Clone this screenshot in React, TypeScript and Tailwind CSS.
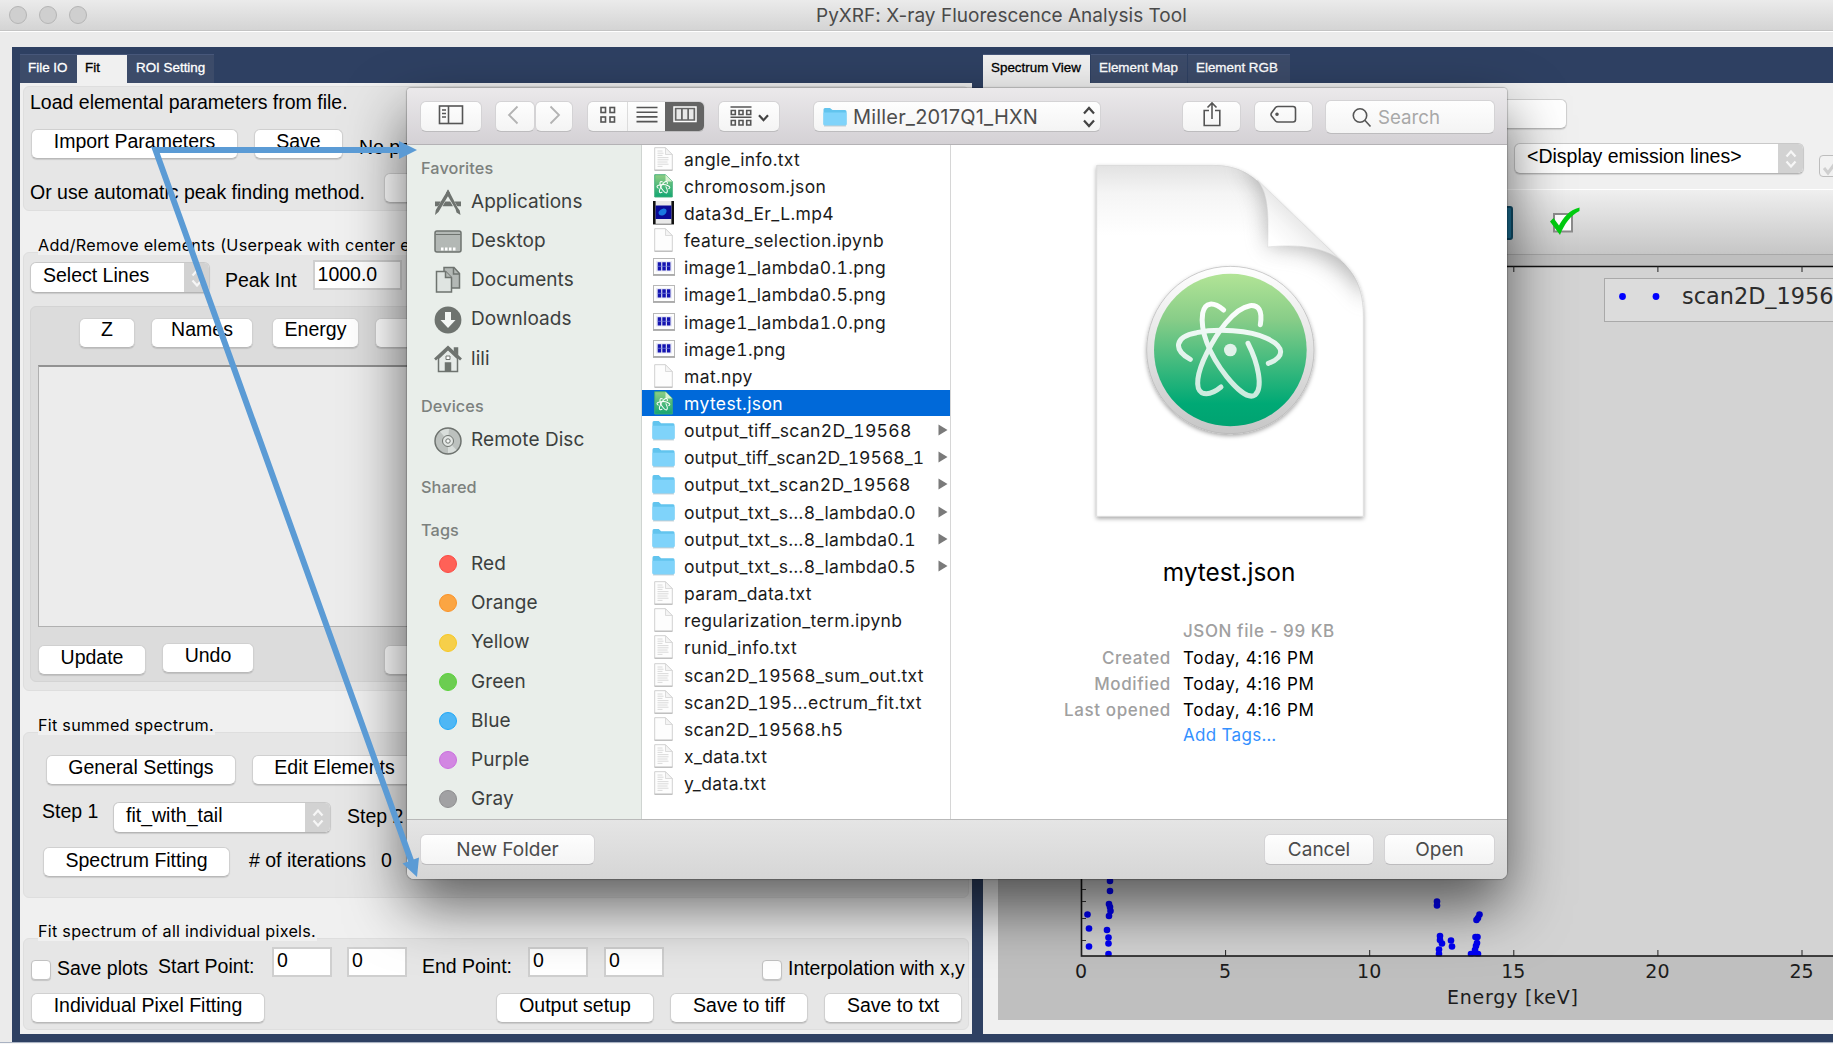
import React from "react";

type Kids = { children?: React.ReactNode; className?: string };

/* ---------- form controls of the main window ---------- */

function Btn({ children, className = "" }: Kids) {
  return (
    <div
      className={`h-[30px] shrink-0 rounded-[6px] border border-[#d0d0d0] border-b-[#b9b9b9] bg-white text-center leading-5 shadow-[0_1px_1px_rgba(0,0,0,0.12)] ${className}`}
    >
      {children}
    </div>
  );
}

function Combo({ children, className = "" }: Kids) {
  return (
    <div
      className={`flex h-[31px] shrink-0 justify-between overflow-hidden rounded-[6px] border border-[#c9c9c9] border-b-[#b5b5b5] bg-white pl-3 leading-5 shadow-[0_1px_1px_rgba(0,0,0,0.12)] ${className}`}
    >
      <span className="whitespace-nowrap pt-[2px]">{children}</span>
      <span className="flex h-full w-[25px] items-center justify-center bg-[#d2d2d2]">
        <svg width="12" height="18" viewBox="0 0 12 18" fill="none" stroke="#f6f6f6" strokeWidth="2.2">
          <path d="M1.5 6.5 6 1.5l4.500 5M1.500 11.500l4.500 5 4.500-5" />
        </svg>
      </span>
    </div>
  );
}

function Field({ children, className = "" }: Kids) {
  return (
    <div className={`h-[30px] shrink-0 border-2 border-[#cfcfcf] bg-white pl-[3px] leading-[23px] ${className}`}>
      {children}
    </div>
  );
}

function Check({ className = "" }: Kids) {
  return (
    <div
      className={`size-[20px] shrink-0 rounded-[4px] border-[1.500px] border-[#c2c2c2] bg-white shadow-[0_1px_1px_rgba(0,0,0,0.15)] ${className}`}
    />
  );
}

function GroupTitle({ children, className = "" }: Kids) {
  return (
    <div
      className={`relative z-10 -mb-[3px] ml-[18px] h-5 w-fit whitespace-nowrap bg-[#f0f0f0] pr-px font-[Inter,sans-serif] text-[16.200px] leading-5 tracking-[0.260px] ${className}`}
    >
      {children}
    </div>
  );
}

function Group({ children, className = "" }: Kids) {
  return (
    <div className={`ml-[3px] w-[946px] shrink-0 rounded-[6px] border border-[#dedede] bg-[#e6e6e6] ${className}`}>
      {children}
    </div>
  );
}

function Txt({ children, className = "" }: Kids) {
  return <span className={`shrink-0 whitespace-nowrap leading-5 ${className}`}>{children}</span>;
}

function FitPanel() {
  return (
    <div className="flex h-[951px] w-[952px] shrink-0 flex-col bg-[#f0f0f0]">
      <Group className="mt-[3px] h-[125px] pt-[5px]">
        <div className="h-5 pl-[6px] leading-5">Load elemental parameters from file.</div>
        <div className="mt-[17px] flex pl-[7px]">
          <Btn className="w-[207px] pt-px">Import Parameters</Btn>
          <Btn className="ml-4 w-[89px] pt-px">Save</Btn>
          <Txt className="ml-4 mt-2">No pe</Txt>
        </div>
        <div className="mt-[14px] flex pl-[6px]">
          <Txt className="mt-[9px] w-[354px]">Or use automatic peak finding method.</Txt>
          <Btn className="w-[200px]" />
        </div>
      </Group>

      <GroupTitle className="mt-[24px]">Add/Remove elements (Userpeak with center e</GroupTitle>
      <Group className="h-[439px] pt-[9px]">
        <div className="flex h-[30px] pl-[6px]">
          <Combo className="w-[180px]">Select Lines</Combo>
          <Txt className="ml-[15px] mt-2">Peak Int</Txt>
          <Field className="-mt-0.5 ml-4 w-[89px] pt-px">1000.0</Field>
        </div>
        <div className="ml-[6px] mt-[14px] h-[376px] w-[930px] rounded-[6px] border border-[#d4d4d4] bg-[#dcdcdc] pt-[11px]">
          <div className="flex pl-[48px]">
            <Btn className="w-[56px]">Z</Btn>
            <Btn className="ml-4 w-[102px]">Names</Btn>
            <Btn className="ml-[19px] w-[87px]">Energy</Btn>
            <Btn className="ml-[16px] w-[100px]" />
          </div>
          <div className="ml-[7px] mt-[17px] h-[262px] w-[900px] border border-t-2 border-[#b0b0b0] border-t-[#929292] bg-[#ececec]" />
          <div className="mt-[16px] flex pl-[7px]">
            <Btn className="mt-[2px] w-[108px] pt-px">Update</Btn>
            <Btn className="ml-4 w-[92px] pt-px">Undo</Btn>
            <Btn className="ml-[130px] mt-[2px] w-[100px]" />
          </div>
        </div>
      </Group>

      <GroupTitle className="mt-[24px]">Fit summed spectrum.</GroupTitle>
      <Group className="h-[166px] pt-[22px]">
        <div className="flex pl-[22px]">
          <Btn className="w-[190px] pt-px">General Settings</Btn>
          <Btn className="ml-4 w-[165px] pt-px">Edit Elements</Btn>
        </div>
        <div className="mt-[17px] flex h-[31px] pl-[18px]">
          <Txt className="-mt-px w-[71px]">Step 1</Txt>
          <Combo className="w-[218px]">fit_with_tail</Combo>
          <Txt className="ml-4 mt-1">Step 2</Txt>
        </div>
        <div className="mt-[14px] flex pl-[19px]">
          <Btn className="w-[187px] pt-[2px]">Spectrum Fitting</Btn>
          <Txt className="ml-[19px] mt-[3px] w-[132px]"># of iterations</Txt>
          <Txt className="mt-[3px]">0</Txt>
        </div>
      </Group>

      <GroupTitle className="mt-[23px]">Fit spectrum of all individual pixels.</GroupTitle>
      <Group className="h-[92px] pt-2">
        <div className="flex h-[30px] pl-[7px]">
          <Check className="mt-[13px]" />
          <Txt className="ml-[6px] mt-[11px] w-[101px]">Save plots</Txt>
          <Txt className="mt-[9px] w-[114px]">Start Point:</Txt>
          <Field className="w-[60px]">0</Field>
          <Field className="ml-[15px] w-[60px]">0</Field>
          <Txt className="ml-[15px] mt-[9px] w-[106px]">End Point:</Txt>
          <Field className="w-[60px]">0</Field>
          <Field className="ml-4 w-[60px]">0</Field>
          <Check className="ml-[98px] mt-[13px]" />
          <Txt className="ml-[6px] mt-[11px] text-[19.400px]">Interpolation with x,y</Txt>
        </div>
        <div className="mt-4 flex pl-[7px]">
          <Btn className="w-[234px] pt-px">Individual Pixel Fitting</Btn>
          <Btn className="ml-[231px] w-[158px] pt-px">Output setup</Btn>
          <Btn className="ml-4 w-[138px] pt-px">Save to tiff</Btn>
          <Btn className="ml-4 w-[138px] pt-px">Save to txt</Btn>
        </div>
      </Group>
    </div>
  );
}

/* ---------- spectrum plot ---------- */

const dots: [number, number][] = [
  [1087.5, 914.5], [1089, 928.5], [1089, 946.5],
  [1110, 881], [1110, 891], [1109, 904], [1110, 907], [1110.5, 911], [1109, 916],
  [1107, 930], [1108.5, 937.5], [1108.5, 943.5], [1108.5, 954],
  [1437, 901.5], [1437, 905.5],
  [1440, 936], [1440, 940], [1442, 943.5], [1439, 949.5], [1439, 954], [1451, 940.5], [1452, 946.5],
  [1479.500, 914.5], [1478, 918], [1476.5, 920],
  [1475.5, 937], [1477.5, 937], [1477, 943], [1476, 946], [1475, 950], [1475, 953], [1471, 954], [1478, 954],
];

function Spectrum() {
  const ticks = [0, 5, 10, 15, 20, 25];
  return (
    <svg width="835" height="765" viewBox="998 255 835 765" className="ml-[15px] shrink-0" fontFamily="'DejaVu Sans', sans-serif">
      <rect x="998" y="255" width="835" height="765" fill="#bfbfbf" />
      <rect x="1081" y="266" width="760" height="690" fill="#d3d3d3" />
      {dots.map(([x, y], i) => (
        <circle key={i} cx={x} cy={y} r="3.3" fill="#0000f5" />
      ))}
      <rect x="1081" y="956.500" width="760" height="8" fill="#bfbfbf" />
      <path d="M1840 266.500H1081.500V956H1840" fill="none" stroke="#111" strokeWidth="1.600" />
      {ticks.map((t, i) => (
        <g key={t}>
          <path d={`M${1081.5 + i * 144.1} 956v-6M${1081.5 + i * 144.1} 266v6`} stroke="#222" />
          <text x={1081 + i * 144.1} y="977.500" textAnchor="middle" fontSize="19" fill="#1c1c1c">
            {t}
          </text>
        </g>
      ))}
      <path d="M1082 889.500h4M1082 901.500h4M1082 918.500h4M1082 940.500h4" stroke="#333" />
      <text x="1447" y="1004" fontSize="19" textLength="131" fill="#1c1c1c">
        Energy [keV]
      </text>
      <rect x="1604.500" y="278.500" width="300" height="43" fill="#dcdcdc" stroke="#a9a9a9" />
      <circle cx="1622.500" cy="296.500" r="3.400" fill="#0000ff" />
      <circle cx="1656" cy="296.500" r="3.400" fill="#0000ff" />
      <text x="1682" y="304" fontSize="22.400" fill="#2c2c2c">
        scan2D_19568
      </text>
    </svg>
  );
}

function SpectrumPanel() {
  return (
    <div className="flex h-[951px] w-[850px] shrink-0 flex-col overflow-hidden bg-[#f0f0f0]">
      <div className="mt-4 flex h-[30px] shrink-0">
        <Btn className="ml-[380px] w-[204px]" />
      </div>
      <div className="mt-[14px] flex h-[31px] shrink-0">
        <Combo className="ml-[531px] w-[290px]">&lt;Display emission lines&gt;</Combo>
        <div className="ml-[15px] mt-3 flex size-[22px] shrink-0 items-end rounded-[4px] border-[1.500px] border-[#bdbdbd] bg-[#f2f2f2]">
          <svg width="20" height="16" viewBox="0 0 20 16" fill="none" stroke="#cfcfcf" strokeWidth="3">
            <path d="M4 8l4 5 8-11" />
          </svg>
        </div>
      </div>
      <div className="mt-[15px] flex h-[66px] shrink-0 border-y border-b-[#a8a8a8] border-t-white bg-linear-to-b from-[#efefef] to-[#c6c6c6]">
        <div className="ml-[500px] mt-[16px] h-[34px] w-[30px] rounded-[3px] border-2 border-[#0f4c68] bg-[#1d6f94]" />
        <svg width="32" height="32" viewBox="0 0 32 32" className="ml-[36px] mt-4">
          <rect x="5" y="8" width="18" height="17.500" fill="#fff" stroke="#8b8b8b" strokeWidth="2" />
          <path d="M1 15.500 4.500 12l5.500 7.500C14 12 20 4 30.500 1.500L30.500 5C22 9 15 18.500 11 29Z" fill="#00cc10" />
        </svg>
      </div>
      <Spectrum />
    </div>
  );
}

/* ---------- file dialog ---------- */

function ToolBtn({ children, className = "" }: Kids) {
  return (
    <div
      className={`flex h-[31px] shrink-0 items-center justify-center rounded-[6px] border border-[#d4d3d5] border-b-[#bdbcbe] bg-linear-to-b from-[#fefefe] to-[#f4f4f4] ${className}`}
    >
      {children}
    </div>
  );
}

function Toolbar() {
  const s = { fill: "none", stroke: "#555", strokeWidth: 1.6 };
  return (
    <div className="flex h-[57px] shrink-0 items-start border-b border-[#b4b2b5] bg-linear-to-b from-[#ebe9eb] to-[#d4d1d5] pl-[13px] pt-3 text-[#4d4d4d]">
      <ToolBtn className="mt-px w-[62px]">
        <svg width="26" height="20" viewBox="0 0 26 20" {...s} className="-mt-1">
          <rect x="1.500" y="1" width="23" height="17.500" />
          <path d="M10.500 1v17.500M4 5h4M4 8.500h4M4 12h4" />
        </svg>
      </ToolBtn>
      <ToolBtn className="ml-[13px] mt-px w-[40px]">
        <svg width="12" height="20" viewBox="0 0 12 20" fill="none" stroke="#b3b3b3" strokeWidth="1.800" className="-ml-1 -mt-1">
          <path d="M10.500 1.500 2 10l8.500 8.500" />
        </svg>
      </ToolBtn>
      <ToolBtn className="mt-px w-[38px]">
        <svg width="12" height="20" viewBox="0 0 12 20" fill="none" stroke="#b3b3b3" strokeWidth="1.800" className="-mt-1 ml-0.5">
          <path d="M1.500 1.500 10 10l-8.500 8.500" />
        </svg>
      </ToolBtn>
      <ToolBtn className="ml-[14px] mt-px w-[118px] overflow-hidden">
        <span className="flex h-full w-[40px] items-center justify-center border-r border-[#dcdcdc]">
          <svg width="16" height="18" viewBox="0 0 16 18" {...s} className="-mt-1">
            <rect x="1" y="1.500" width="4.500" height="5" />
            <rect x="10" y="1.500" width="4.500" height="5" />
            <rect x="1" y="11" width="4.500" height="5" />
            <rect x="10" y="11" width="4.500" height="5" />
          </svg>
        </span>
        <span className="flex h-full flex-1 items-center justify-center">
          <svg width="22" height="17" viewBox="0 0 22 17" {...s} className="-mt-1">
            <path d="M0.500 1.500h21M0.500 6.200h21M0.500 10.900h21M0.500 15.600h21" />
          </svg>
        </span>
        <span className="flex h-full w-[39px] items-center justify-center bg-[#646464]">
          <svg width="24" height="17" viewBox="0 0 24 17" className="-mt-1">
            <rect x="1" y="1" width="22" height="14.500" fill="none" stroke="#fff" strokeWidth="1.500" />
            <path d="M3.500 3.200h4.500v10H3.500zM9.800 3.200h4.500v10H9.800zM16 3.200h4.500v10H16z" fill="#e8e8e8" />
          </svg>
        </span>
      </ToolBtn>
      <ToolBtn className="ml-[13px] mt-px w-[62px] gap-[6px]">
        <svg width="22" height="21" viewBox="0 0 22 21" {...s}>
          <path d="M0.500 1h21M0.500 11.300h21" />
          <path d="M1.300 4.500h4v4h-4zM9 4.500h4v4H9zM16.700 4.500h4v4h-4zM1.300 14.500h4v4.500h-4zM9 14.500h4v4.500H9zM16.700 14.500h4v4.500h-4z" />
        </svg>
        <svg width="11" height="8" viewBox="0 0 11 8" fill="none" stroke="#444" strokeWidth="2.200" className="mt-[3px]">
          <path d="M1 1.200l4.500 5 4.500-5" />
        </svg>
      </ToolBtn>
      <ToolBtn className="ml-[33px] mt-px w-[288px] !justify-start pl-[9px]">
        <Folder className="h-[20px] w-[24px]" />
        <span className="ml-[6px] text-[20px] leading-5 tracking-[0.180px]">Miller_2017Q1_HXN</span>
        <svg width="12" height="22" viewBox="0 0 12 22" fill="none" stroke="#444" strokeWidth="2.200" className="ml-auto mr-[5px]">
          <path d="M1 7.500 6 2l5 5.500M1 14.500 6 20l5-5.500" />
        </svg>
      </ToolBtn>
      <ToolBtn className="ml-[81px] mt-px w-[59px]">
        <svg width="18" height="27" viewBox="0 0 18 27" {...s} className="-mt-1">
          <path d="M6 9.500H1.200v15h15.600v-15H12M9 18V2M4.500 6.500 9 2l4.500 4.500" />
        </svg>
      </ToolBtn>
      <ToolBtn className="ml-[13px] mt-px w-[59px]">
        <svg width="27" height="19" viewBox="0 0 27 19" {...s} className="-mt-1">
          <path d="M8 1.500h15q2.500 0 2.500 2.500v10.500q0 2.500-2.500 2.500H8Q6.500 17 5.500 16L1.500 11q-1-1.500 0-3L5.500 2.500Q6.500 1.500 8 1.500Z" />
          <circle cx="7" cy="9.300" r="1" fill="#555" />
        </svg>
      </ToolBtn>
      <ToolBtn className="ml-[12px] h-[34px] w-[170px] !justify-start pl-[26px] !text-[#a8a8a8]">
        <svg width="20" height="21" viewBox="0 0 20 21" {...s}>
          <circle cx="8" cy="8.500" r="6.700" />
          <path d="M12.800 13.300 18.500 19.500" />
        </svg>
        <span className="ml-[6px] pt-px text-[18.700px] leading-5">Search</span>
      </ToolBtn>
    </div>
  );
}

function Folder({ className = "" }: Kids) {
  return (
    <svg viewBox="0 0 24 20" preserveAspectRatio="none" className={`shrink-0 ${className}`}>
      <path d="M0.500 2.500q0-1.500 1.500-1.500h5l2.500 2H22q1.500 0 1.500 1.500V17q0 1.500-1.500 1.500H2Q.500 18.500.500 17Z" fill="#62c4ee" />
      <path d="M.500 5.500h23V17q0 1.500-1.500 1.500H2Q.500 18.500.500 17Z" fill="#7fd3fa" />
      <path d="M1 19h22" stroke="#b9c4ca" strokeWidth=".8" />
    </svg>
  );
}

const sideIcons: Record<string, React.ReactNode> = {
  Applications: (
    <g fill="#6e736f">
      <path d="M12 5 14 1.500l2 3.500-2.200 3.600L4.500 24 1 27l.8-5Z" />
      <path d="M16 5 14 1.500l-2 3.500L21.500 21l1 3.500 4 2.500-.8-4.500-2.200-3Z" />
      <path d="M1 13.500h5.800l-2.700 4.700H1ZM11.300 13.500h4.900l2.800 4.700H8.500ZM20.500 13.500H27v4.700h-3.700Z" />
    </g>
  ),
  Desktop: (
    <g>
      <rect x="1" y="4" width="26" height="21" rx="2" fill="#b3b8b5" stroke="#6e736f" strokeWidth="1.500" />
      <path d="M1.500 7.500h25" stroke="#6e736f" strokeWidth="1.200" />
      <path d="M7 20.500h2.500v3H7zM11 20.500h2.500v3H11zM15 20.500h2.500v3H15zM19 20.500h2.500v3H19z" fill="#fff" />
    </g>
  ),
  Documents: (
    <g stroke="#6e736f" strokeWidth="1.500">
      <path d="M10 1.500h10l5.500 6v14.500H10Z" fill="#b3b8b5" />
      <path d="M19.500 2v6h6" fill="none" />
      <path d="M2.500 5.500h9l6 6v14.500h-15Z" fill="#dfe4e1" />
      <path d="M11.500 5.500v6h6" fill="#b3b8b5" />
    </g>
  ),
  Downloads: (
    <g>
      <circle cx="14" cy="14" r="13.400" fill="#6e736f" />
      <path d="M11 6h6v8h4.500L14 22 6.500 14H11Z" fill="#f3f6f4" />
    </g>
  ),
  lili: (
    <g stroke="#6e736f" strokeWidth="1.500">
      <path d="M4.500 13.500 14 4.500l9.500 9V26.500h-19Z" fill="#e6ebe8" />
      <path d="M1 14.500 14 2.500l13 12" fill="none" strokeWidth="2.800" />
      <path d="M20.500 3h3v6l-3-3Z" fill="#6e736f" />
      <path d="M11.500 18h5v8h-5Z" fill="#6e736f" />
      <path d="M12 11h4v3.500h-4Z" fill="#fff" strokeWidth="1" />
    </g>
  ),
  "Remote Disc": (
    <g fill="none" stroke="#6e736f">
      <circle cx="14" cy="14" r="13" fill="#bcc1be" strokeWidth="1.500" />
      <path d="M14 14 6 4.500A12 12 0 0 1 15 2ZM14 14l8.500 9A12 12 0 0 1 14 26Z" fill="#d9dedb" stroke="none" />
      <circle cx="14" cy="14" r="5.500" fill="#e3e7e4" strokeWidth="1" />
      <circle cx="14" cy="14" r="2.200" fill="#f5f7f6" strokeWidth="1" />
    </g>
  ),
};

const tags = [
  ["Red", "bg-[#ff6157] border-[#fb4a44]"],
  ["Orange", "bg-[#fba543] border-[#fb9327]"],
  ["Yellow", "bg-[#f6cf4a] border-[#f8c822]"],
  ["Green", "bg-[#6ccd51] border-[#5bd23b]"],
  ["Blue", "bg-[#4fb7f5] border-[#1fa8f8]"],
  ["Purple", "bg-[#d287e2] border-[#ca70de]"],
  ["Gray", "bg-[#a1a1a3] border-[#8e8e90]"],
];

function SideItem({ label, children }: { label: string; children: React.ReactNode }) {
  return (
    <div className="flex h-[39.200px] items-center pl-[27px] text-[19px] text-[#3c403e]">
      <span className="flex w-7 justify-center">{children}</span>
      <span className="ml-[9px] tracking-[0.060px]">{label}</span>
    </div>
  );
}

function Heading({ children, className = "" }: Kids) {
  return (
    <div className={`pl-[14px] text-[16.300px] font-medium leading-5 tracking-[0.100px] text-[#7c817e] ${className}`}>
      {children}
    </div>
  );
}

function SideIcon({ name }: { name: string }) {
  return (
    <svg width="28" height="28" viewBox="0 0 28 28">
      {sideIcons[name]}
    </svg>
  );
}

function Sidebar() {
  return (
    <div className="w-[235px] shrink-0 border-r border-[#cfd4d1] bg-[#e9eeea] pt-[12.500px]">
      <Heading>Favorites</Heading>
      <div className="mt-[5px]">
        {["Applications", "Desktop", "Documents", "Downloads", "lili"].map((n) => (
          <SideItem key={n} label={n}>
            <SideIcon name={n} />
          </SideItem>
        ))}
      </div>
      <Heading className="mt-[17.500px]">Devices</Heading>
      <div className="mt-[5px]">
        <SideItem label="Remote Disc">
          <SideIcon name="Remote Disc" />
        </SideItem>
      </div>
      <Heading className="mt-[17px]">Shared</Heading>
      <Heading className="mt-[23px]">Tags</Heading>
      <div className="mt-[4.500px]">
        {tags.map(([n, c]) => (
          <SideItem key={n} label={n}>
            <span className={`size-[18px] rounded-full border-[1.500px] ${c}`} />
          </SideItem>
        ))}
      </div>
    </div>
  );
}

const atom = (
  <>
    <path d="M421 628C370 600 372 560 440 548C500 535 600 540 650 565C705 590 705 622 655 640" />
    <path d="M521 480C490 455 465 455 458 490C450 540 475 610 530 680C570 730 600 745 615 735C640 715 625 640 594 580" />
    <path d="M631 524C638 480 625 465 600 467C550 475 500 550 470 610C440 670 435 715 455 728C470 735 490 730 513 711" />
  </>
);

function FileIcon({ kind }: { kind: string }) {
  if (kind === "folder") return <Folder className="h-[21px] w-[23px]" />;
  if (kind === "png")
    return (
      <svg width="22" height="18" viewBox="0 0 22 18">
        <rect x=".5" y=".5" width="21" height="16" fill="#fdfdfd" stroke="#b8b8b8" />
        <path d="M0 17.200h22" stroke="#8f8f8f" />
        <rect x="3" y="3" width="16" height="10.500" fill="#e9eaf6" />
        <path d="M4.700 4.200h3.500v8.300h-3.500zM9.300 4.200h3.500v8.300H9.300zM13.900 4.200h3.500v8.300h-3.500z" fill="#1414b0" />
        <path d="M4.500 8.300h13" stroke="#7c86e0" strokeWidth=".7" />
      </svg>
    );
  if (kind === "mp4")
    return (
      <svg width="21" height="24" viewBox="0 0 21 24">
        <rect width="21" height="22.500" fill="#e9e9e9" />
        <rect x="0" y="22.500" width="21" height="1.500" fill="#9a9a9a" />
        <path d="M0 0h2.600v23H0zM18.400 0H21v23h-2.600z" fill="#111" />
        <rect x="2.600" y="4.500" width="15.800" height="13.500" fill="#0a0a96" />
        <path d="M5.500 11q1.500-3 5-3.500 3.500 0 3 3t-4 4q-4 .5-4-3.500Z" fill="#1a78e0" />
      </svg>
    );
  const json = kind === "json";
  return (
    <svg width="19" height="24" viewBox="0 0 19 24">
      <defs>
        <linearGradient id="jsonIcon" x1="0" y1="0" x2="0" y2="1">
          <stop offset="0" stopColor="#8fce83" />
          <stop offset="1" stopColor="#12a673" />
        </linearGradient>
      </defs>
      <path
        d="M.7.7H11.500L18.300 7.500V23H.700Z"
        fill={json ? "url(#jsonIcon)" : "#fdfdfd"}
        stroke={json ? "#3fae78" : "#cccccc"}
        strokeWidth=".9"
      />
      <path d="M11.500.8V7.500h6.700Z" fill={json ? "#d9f2d4" : "#f4f4f4"} stroke={json ? "none" : "#d4d4d4"} strokeWidth=".8" />
      {!json && <path d="M.5 23.300h18" stroke="#b0b0b0" strokeWidth=".9" />}
      {kind === "txt" && (
        <path
          d="M3.500 4h5M3.500 6.200h6M3.500 8.400h5M3.500 10.600h11M3.500 12.800h11M3.500 15h10M3.500 17.200h11M3.500 19.400h5"
          stroke="#d6d6d6"
          strokeWidth=".9"
        />
      )}
      {json && (
        <g transform="translate(-13.200 -12) scale(.042)" fill="none" stroke="#fff" strokeWidth="24">
          {atom}
        </g>
      )}
    </svg>
  );
}

const files = [
  ["angle_info.txt", "txt"],
  ["chromosom.json", "json"],
  ["data3d_Er_L.mp4", "mp4"],
  ["feature_selection.ipynb", "blank"],
  ["image1_lambda0.1.png", "png"],
  ["image1_lambda0.5.png", "png"],
  ["image1_lambda1.0.png", "png"],
  ["image1.png", "png"],
  ["mat.npy", "blank"],
  ["mytest.json", "json"],
  ["output_tiff_scan2D_19568", "folder"],
  ["output_tiff_scan2D_19568_1", "folder"],
  ["output_txt_scan2D_19568", "folder"],
  ["output_txt_s…8_lambda0.0", "folder"],
  ["output_txt_s…8_lambda0.1", "folder"],
  ["output_txt_s…8_lambda0.5", "folder"],
  ["param_data.txt", "txt"],
  ["regularization_term.ipynb", "blank"],
  ["runid_info.txt", "txt"],
  ["scan2D_19568_sum_out.txt", "txt"],
  ["scan2D_195…ectrum_fit.txt", "txt"],
  ["scan2D_19568.h5", "blank"],
  ["x_data.txt", "txt"],
  ["y_data.txt", "txt"],
];

function FileList() {
  return (
    <div className="w-[309px] shrink-0 border-r border-[#d6d6d6] bg-white pt-px">
      {files.map(([name, kind]) => {
        const selected = name === "mytest.json";
        const tight = name === "output_tiff_scan2D_19568_1";
        return (
          <div
            key={name}
            className={`flex h-[27.160px] items-center border-b-2 border-white bg-clip-padding pl-[10px] pr-[2px] ${selected ? "bg-[#0069d9] text-white" : "text-[#1b1b1b]"}`}
          >
            <span className="flex w-[23px] shrink-0 justify-center">
              <FileIcon kind={kind} />
            </span>
            <span
              className={`ml-[9px] whitespace-nowrap pt-0.5 text-[17.500px] leading-5 tabular-nums ${tight ? "tracking-[0.080px]" : "tracking-[0.370px]"}`}
            >
              {name}
            </span>
            {kind === "folder" && (
              <svg width="10" height="12" viewBox="0 0 10 12" className="ml-auto shrink-0">
                <path d="M.5.5 9.500 6 .5 11.500Z" fill="#7a7a7a" />
              </svg>
            )}
          </div>
        );
      })}
    </div>
  );
}

function DocumentArt() {
  return (
    <svg width="290" height="372" viewBox="102 24 870 1116" className="mt-[13px] shrink-0">
      <defs>
        <linearGradient id="page" x1="0" y1="0" x2="0" y2="1">
          <stop offset="0" stopColor="#e2e2e2" />
          <stop offset=".08" stopColor="#f5f5f5" />
          <stop offset=".2" stopColor="#fff" />
        </linearGradient>
        <linearGradient id="curl" x1="0" y1="1" x2=".75" y2="0.250">
          <stop offset=".3" stopColor="#fff" />
          <stop offset=".5" stopColor="#f6f6f6" />
          <stop offset="1" stopColor="#cfcfcf" />
        </linearGradient>
        <linearGradient id="ring" x1="0" y1="0" x2="0" y2="1">
          <stop offset="0" stopColor="#fff" />
          <stop offset="1" stopColor="#c6c6c6" />
        </linearGradient>
        <linearGradient id="disc" x1="0" y1="0" x2="0" y2="1">
          <stop offset="0" stopColor="#b2e496" />
          <stop offset=".3" stopColor="#88cd88" />
          <stop offset=".85" stopColor="#00a975" />
          <stop offset="1" stopColor="#00a371" />
        </linearGradient>
        <linearGradient id="orbit" gradientUnits="userSpaceOnUse" x1="0" y1="455" x2="0" y2="745">
          <stop offset="0" stopColor="#fff" />
          <stop offset="1" stopColor="#c9e9dc" />
        </linearGradient>
        <clipPath id="pageClip">
          <path d="M140 46H490C560 46 600 70 640 110L860 320C920 370 940 420 940 500V1099H140Z" />
        </clipPath>
        <filter id="soft" x="-50%" y="-50%" width="200%" height="200%">
          <feGaussianBlur stdDeviation="32" />
        </filter>
        <filter id="drop" x="-10%" y="-10%" width="120%" height="120%">
          <feDropShadow dx="0" dy="6" stdDeviation="7" floodOpacity=".35" />
        </filter>
      </defs>
      <path
        d="M140 46H490C560 46 600 70 640 110L860 320C920 370 940 420 940 500V1099H140Z"
        fill="url(#page)"
        stroke="#d4d4d4"
        strokeWidth="2"
        filter="url(#drop)"
      />
      <g clipPath="url(#pageClip)">
        <path d="M575 40C645 120 655 200 653 291C740 285 850 300 955 450L1000 300 700 20Z" fill="#7c7c7c" opacity=".55" filter="url(#soft)" />
      </g>
      <path d="M622 90C655 130 656 190 653 291C740 282 820 290 872 330Z" fill="url(#curl)" stroke="#d5d5d5" strokeWidth="1.500" />
      <circle cx="541" cy="600" r="251" fill="url(#ring)" stroke="#b4b4b4" strokeWidth="2" filter="url(#drop)" />
      <circle cx="541" cy="600" r="229" fill="url(#disc)" />
      <g fill="none" stroke="url(#orbit)" strokeWidth="15" strokeLinecap="round">
        {atom}
      </g>
      <circle cx="541" cy="600" r="19" fill="#e1f2ea" />
    </svg>
  );
}

function Preview() {
  const rows = [
    ["Created", "Today, 4:16 PM"],
    ["Modified", "Today, 4:16 PM"],
    ["Last opened", "Today, 4:16 PM"],
  ];
  return (
    <div className="flex flex-1 flex-col items-center overflow-hidden bg-white text-black">
      <DocumentArt />
      <div className="mt-[27px] text-[24.400px] leading-[30px]">mytest.json</div>
      <div className="mt-[32px] w-full text-[17px] leading-[25.700px] tracking-[0.660px]">
        <div className="mb-[1.500px] pl-[232px] font-medium tracking-[0.580px] text-[#a0a0a0]">JSON file - 99 KB</div>
        {rows.map(([k, v]) => (
          <div key={k} className="flex">
            <span className="w-[220px] text-right font-medium tracking-[0.620px] text-[#a0a0a0]">{k}</span>
            <span className="ml-[12px]">{v}</span>
          </div>
        ))}
        <div className="pl-[232px] tracking-[0.300px] text-[#3490ff]">Add Tags…</div>
      </div>
    </div>
  );
}

function FileDialog() {
  return (
    <div className="absolute left-[407px] top-[88px] z-20 flex h-[791px] w-[1100px] flex-col overflow-hidden rounded-b-[7px] rounded-t-[4px] font-[Inter,sans-serif] shadow-[0_0_1px_1px_rgba(0,0,0,0.200),0_27px_60px_rgba(0,0,0,0.600)]">
      <Toolbar />
      <div className="flex h-[674px] shrink-0">
        <Sidebar />
        <FileList />
        <Preview />
      </div>
      <div className="flex flex-1 items-start border-t border-[#b9b9b9] bg-linear-to-b from-[#e5e5e5] to-[#d6d6d6] pl-[13px] pr-[12px] pt-[14px] text-[19px] text-[#4b4b4b]">
        <ToolBtn className="w-[175px] pt-[2px]">New Folder</ToolBtn>
        <ToolBtn className="ml-auto w-[110px] pt-[2px]">Cancel</ToolBtn>
        <ToolBtn className="ml-[10px] w-[111px] pt-[2px]">Open</ToolBtn>
      </div>
    </div>
  );
}

/* ---------- window ---------- */

function Tab({ children, className = "" }: Kids) {
  return (
    <div
      className={`h-full border-t border-t-[#47577a] bg-[#3c4b69] pl-2 leading-[26px] text-white [-webkit-text-stroke:0.300px] ${className}`}
    >
      {children}
    </div>
  );
}

export default function App() {
  return (
    <div className="relative h-[1044px] w-[1833px] overflow-hidden bg-[#ebebeb] font-['Liberation_Sans',Arial,sans-serif] text-[19.500px] text-black">
      <div className="flex h-[31px] items-center border-b border-[#c4c4c4] bg-linear-to-b from-[#ebebeb] to-[#d4d4d4] font-[Inter,sans-serif] text-[19px] text-[#4a4a4a]">
        <div className="ml-[9px] flex w-[807px] gap-3">
          <span className="size-[18px] rounded-full border border-[#b5b5b5] bg-[#cfcfcf]" />
          <span className="size-[18px] rounded-full border border-[#b5b5b5] bg-[#cfcfcf]" />
          <span className="size-[18px] rounded-full border border-[#b5b5b5] bg-[#cfcfcf]" />
        </div>
        <span className="whitespace-nowrap pt-[3px] tracking-[0.020px]">PyXRF: X-ray Fluorescence Analysis Tool</span>
      </div>
      <div className="h-4 border-t border-white" />
      <div className="ml-3 h-[995px] bg-[#2e4062] pl-2">
        <div className="flex h-9 pt-[7px] text-[13.400px]">
          <div className="flex w-[963px]">
            <Tab className="w-[57px]">File IO</Tab>
            <Tab className="w-[50px] !bg-[#f0f0f0] !text-black">Fit</Tab>
            <Tab className="w-[87px] !pl-[9px]">ROI Setting</Tab>
          </div>
          <Tab className="w-[107px] !bg-[#f0f0f0] !text-black">Spectrum View</Tab>
          <Tab className="ml-px w-[96px]">Element Map</Tab>
          <Tab className="ml-px w-[102px]">Element RGB</Tab>
        </div>
        <div className="flex">
          <FitPanel />
          <div className="w-[11px] shrink-0" />
          <SpectrumPanel />
        </div>
      </div>
      <div className="h-[2px] border-b border-[#f6f6f6] bg-[#a9b2c2]" />
      <FileDialog />
      <svg className="pointer-events-none absolute left-0 top-0 z-30" width="430" height="890" viewBox="0 0 430 890">
        <path d="M404 150H155.500L411.500 862" fill="none" stroke="#5b9bd5" strokeWidth="6" />
        <path d="M399 141 417 150 399 159ZM402.500 863.500 417 877 419 857.500Z" fill="#5b9bd5" />
      </svg>
    </div>
  );
}
